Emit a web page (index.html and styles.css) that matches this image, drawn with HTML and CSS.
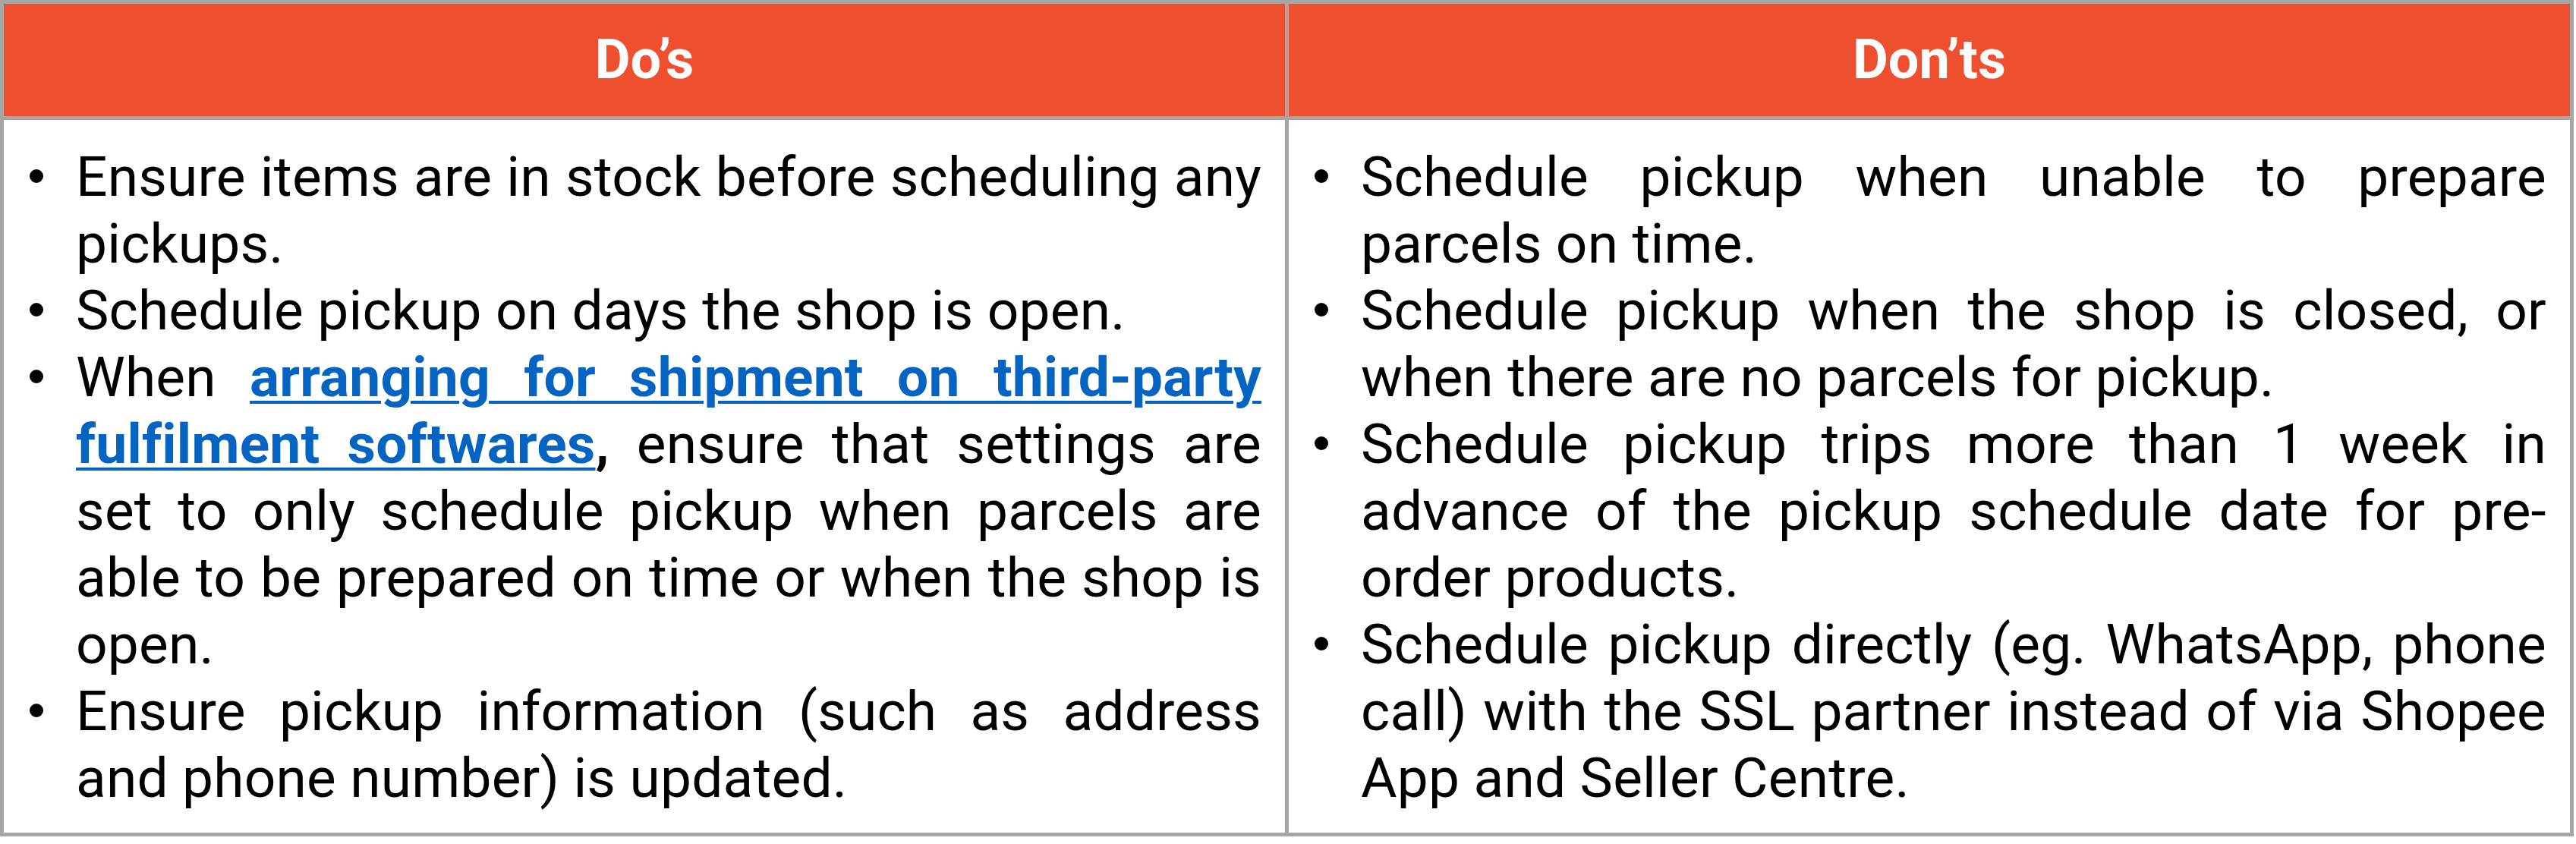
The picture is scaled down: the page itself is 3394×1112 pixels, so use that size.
FILE: index.html
```html
<!DOCTYPE html>
<html lang="en">
<head>
<meta charset="utf-8">
<title>Do's and Don'ts</title>
<link rel="stylesheet" href="styles.css">
</head>
<body>
<div class="table">
  <div class="head">Do’s</div>
  <div class="head">Don’ts</div>
  <div class="cell">
    <ul class="list">
      <li class="item"><span class="dot"></span><span class="txt">Ensure items are in stock before scheduling any pickups.</span></li>
      <li class="item"><span class="dot"></span><span class="txt">Schedule pickup on days the shop is open.</span></li>
      <li class="item"><span class="dot"></span><span class="txt">When <a class="link" href="#">arranging for shipment on third-party fulfilment softwares</a><b>,</b> ensure that settings are set to only schedule pickup when parcels are able to be prepared on time or when the shop is open.</span></li>
      <li class="item"><span class="dot"></span><span class="txt">Ensure pickup information (such as address and phone number) is updated.</span></li>
    </ul>
  </div>
  <div class="cell">
    <ul class="list">
      <li class="item"><span class="dot"></span><span class="txt">Schedule pickup when unable to prepare parcels on time.</span></li>
      <li class="item"><span class="dot"></span><span class="txt">Schedule pickup when the shop is closed, or when there are no parcels for pickup.</span></li>
      <li class="item"><span class="dot"></span><span class="txt">Schedule pickup trips more than 1 week in advance of the pickup schedule date for pre-order products.</span></li>
      <li class="item"><span class="dot"></span><span class="txt">Schedule pickup directly (eg. WhatsApp, phone call) with the SSL partner instead of via Shopee App and Seller Centre.</span></li>
    </ul>
  </div>
</div>
</body>
</html>
```
FILE: styles.css
```css
html, body {
  margin: 0;
  padding: 0;
  background: #ffffff;
}

body {
  font-family: Roboto, "Liberation Sans", sans-serif;
  color: #000000;
}

.table {
  display: grid;
  grid-template-columns: 1688px 1688px;
  grid-template-rows: 148px auto;
  gap: 5px;
  padding: 5px;
  width: 3391px;
  box-sizing: border-box;
  background: #a6a6a6;
}

.head {
  background: #ee4f2f;
  color: #ffffff;
  font-weight: 700;
  font-size: 72px;
  display: flex;
  align-items: center;
  justify-content: center;
  line-height: 1;
}

.cell {
  background: #ffffff;
  padding: 31px 31px 28px 34px;
}

.list {
  list-style: none;
  margin: 0;
  padding: 0;
}

.item {
  display: flex;
  font-size: 73px;
  letter-spacing: 0.2px;
  line-height: 88px;
}

.dot {
  flex: 0 0 auto;
  width: 18px;
  height: 18px;
  border-radius: 50%;
  background: #000000;
  margin-top: 34px;
  margin-right: 43px;
}

.txt {
  flex: 1 1 auto;
  min-width: 0;
  text-align: justify;
}

.link {
  color: #0563c1;
  font-weight: 700;
  text-decoration: underline;
  text-decoration-thickness: 4px;
  text-underline-offset: 6px;
}
```
